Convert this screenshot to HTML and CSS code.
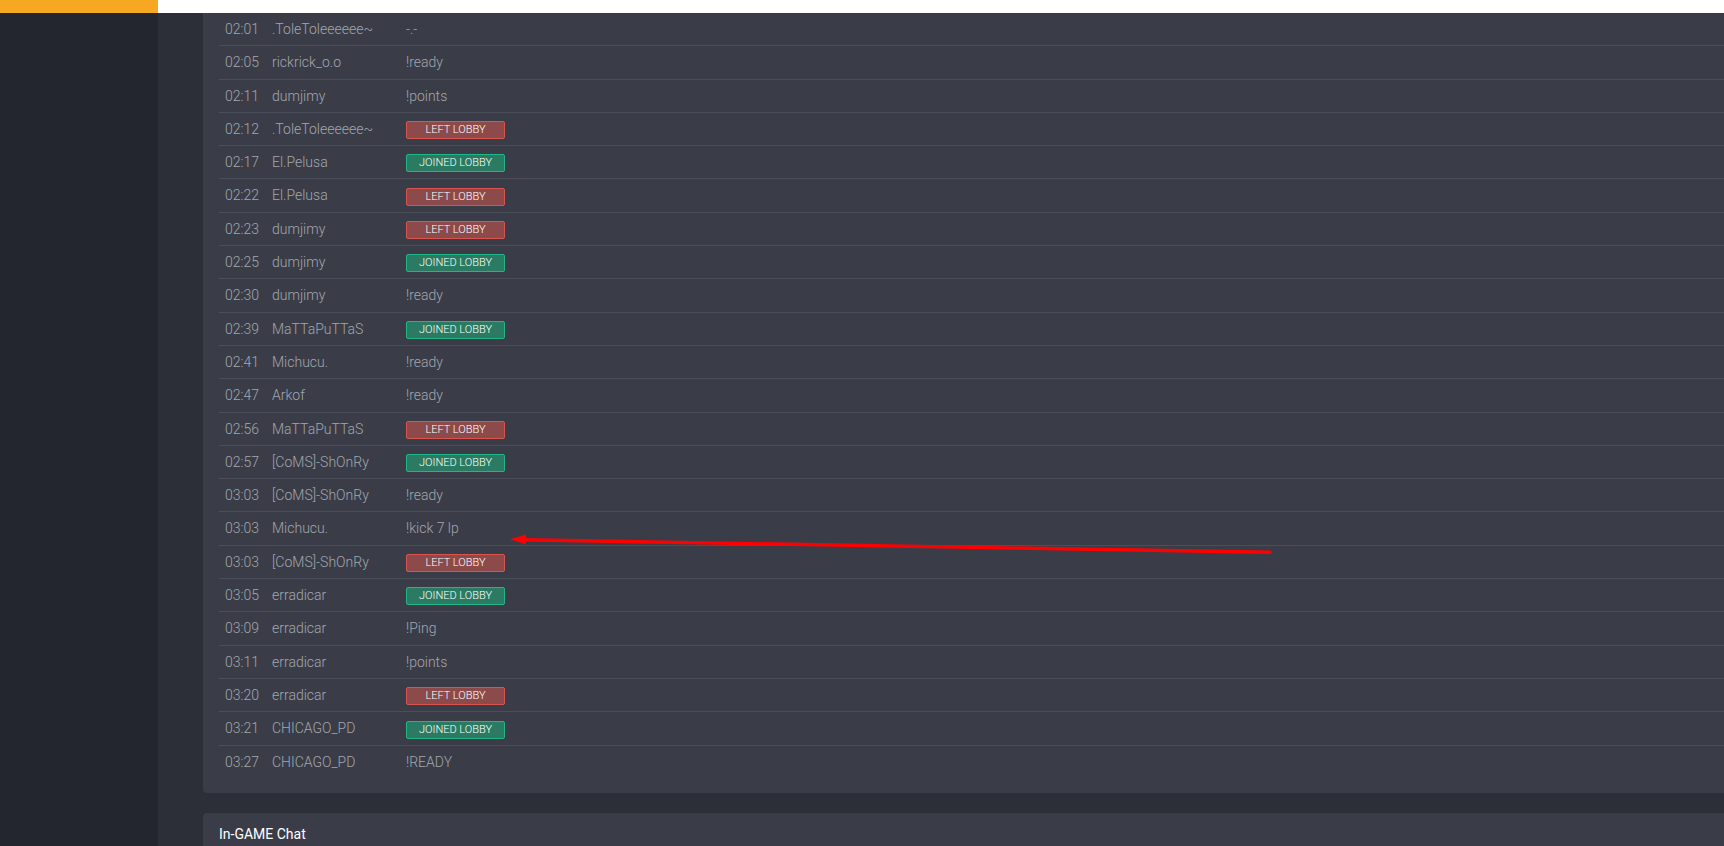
FILE: index.html
```html
<!DOCTYPE html>
<html lang="en">
<head>
    <meta charset="UTF-8">
    <meta name="viewport" content="width=device-width, initial-scale=1.0">
    <title>Lobby Chat</title>
    <link rel="stylesheet" href="styles.css">
</head>
<body>
    <header class="topbar">
        <div class="brand"></div>
        <div class="topbar-fill"></div>
    </header>
    <div class="layout">
        <aside class="sidebar"></aside>
        <main class="content">
            <div class="card chat-card">
                <table class="chat-log">
                    <colgroup>
                        <col class="col-time">
                        <col class="col-name">
                        <col>
                    </colgroup>
                    <tbody>
                        <tr><td>02:01</td><td>.ToleToleeeeee~</td><td>-.-</td></tr>
                        <tr><td>02:05</td><td>rickrick_o.o</td><td>!ready</td></tr>
                        <tr><td>02:11</td><td>dumjimy</td><td>!points</td></tr>
                        <tr><td>02:12</td><td>.ToleToleeeeee~</td><td><span class="badge badge-left">Left lobby</span></td></tr>
                        <tr><td>02:17</td><td>El.Pelusa</td><td><span class="badge badge-joined">Joined lobby</span></td></tr>
                        <tr><td>02:22</td><td>El.Pelusa</td><td><span class="badge badge-left">Left lobby</span></td></tr>
                        <tr><td>02:23</td><td>dumjimy</td><td><span class="badge badge-left">Left lobby</span></td></tr>
                        <tr><td>02:25</td><td>dumjimy</td><td><span class="badge badge-joined">Joined lobby</span></td></tr>
                        <tr><td>02:30</td><td>dumjimy</td><td>!ready</td></tr>
                        <tr><td>02:39</td><td>MaTTaPuTTaS</td><td><span class="badge badge-joined">Joined lobby</span></td></tr>
                        <tr><td>02:41</td><td>Michucu.</td><td>!ready</td></tr>
                        <tr><td>02:47</td><td>Arkof</td><td>!ready</td></tr>
                        <tr><td>02:56</td><td>MaTTaPuTTaS</td><td><span class="badge badge-left">Left lobby</span></td></tr>
                        <tr><td>02:57</td><td>[CoMS]-ShOnRy</td><td><span class="badge badge-joined">Joined lobby</span></td></tr>
                        <tr><td>03:03</td><td>[CoMS]-ShOnRy</td><td>!ready</td></tr>
                        <tr><td>03:03</td><td>Michucu.</td><td>!kick 7 lp</td></tr>
                        <tr><td>03:03</td><td>[CoMS]-ShOnRy</td><td><span class="badge badge-left">Left lobby</span></td></tr>
                        <tr><td>03:05</td><td>erradicar</td><td><span class="badge badge-joined">Joined lobby</span></td></tr>
                        <tr><td>03:09</td><td>erradicar</td><td>!Ping</td></tr>
                        <tr><td>03:11</td><td>erradicar</td><td>!points</td></tr>
                        <tr><td>03:20</td><td>erradicar</td><td><span class="badge badge-left">Left lobby</span></td></tr>
                        <tr><td>03:21</td><td>CHICAGO_PD</td><td><span class="badge badge-joined">Joined lobby</span></td></tr>
                        <tr><td>03:27</td><td>CHICAGO_PD</td><td>!READY</td></tr>
                    </tbody>
                </table>
            </div>
            <div class="card">
                <div class="card-header">In-GAME Chat</div>
            </div>
        </main>
    </div>

    <!-- annotation arrow drawn over the screenshot -->
    <svg class="annotation" width="1724" height="846" viewBox="0 0 1724 846">
        <line x1="1270" y1="552.3" x2="522" y2="539.8" stroke="#ff0000" stroke-width="3.4" stroke-linecap="round"/>
        <polygon points="510,539.3 526,534.6 526,544.4" fill="#ff0000"/>
    </svg>
</body>
</html>
```

FILE: styles.css
```css
body {
    margin: 0;
    font-family: Roboto, "Liberation Sans", Arial, sans-serif;
    background-color: #2c2f38;
    color: #a3a6ae;
    overflow: hidden;
    height: 846px;
}
.topbar {
    display: flex;
    height: 13px;
}
.brand {
    width: 158px;
    background-color: #f7a823;
}
.topbar-fill {
    flex: 1;
    background-color: #ffffff;
}
.layout {
    display: flex;
    height: 833px;
}
.sidebar {
    width: 158px;
    flex-shrink: 0;
    background-color: #23262e;
}
.content {
    flex: 1;
    padding-left: 45px;
    margin-right: -30px;
    min-width: 0;
}
.card {
    background-color: #3a3d47;
    border-radius: 4px;
    margin-bottom: 20px;
}
.chat-card {
    padding: 0 16px 15px 16px;
    border-top-left-radius: 0;
    border-top-right-radius: 0;
}
.chat-log {
    width: 100%;
    border-collapse: collapse;
    table-layout: fixed;
    font-size: 14px;
    font-weight: 300;
    line-height: 20.3px;
}
.col-time {
    width: 47px;
}
.col-name {
    width: 134px;
}
.chat-log td {
    padding: 6px;
    white-space: nowrap;
    vertical-align: middle;
}
.chat-log tr {
    border-bottom: 1px solid #4a4d5a;
}
.chat-log tr:last-child {
    border-bottom: none;
}
.badge {
    display: inline-block;
    box-sizing: border-box;
    width: 99px;
    height: 18px;
    line-height: 16px;
    font-size: 11px;
    font-weight: 300;
    text-align: center;
    text-transform: uppercase;
    color: #ffffff;
    border-radius: 2px;
    vertical-align: middle;
}
.badge-left {
    background-color: #8c4a4a;
    border: 1px solid #d9534f;
}
.badge-joined {
    background-color: #2a7b62;
    border: 1px solid #1fb787;
}
.card-header {
    padding: 11px 16px;
    font-size: 14px;
    line-height: 20px;
    color: #ffffff;
}
.annotation {
    position: absolute;
    top: 0;
    left: 0;
    pointer-events: none;
}
```
